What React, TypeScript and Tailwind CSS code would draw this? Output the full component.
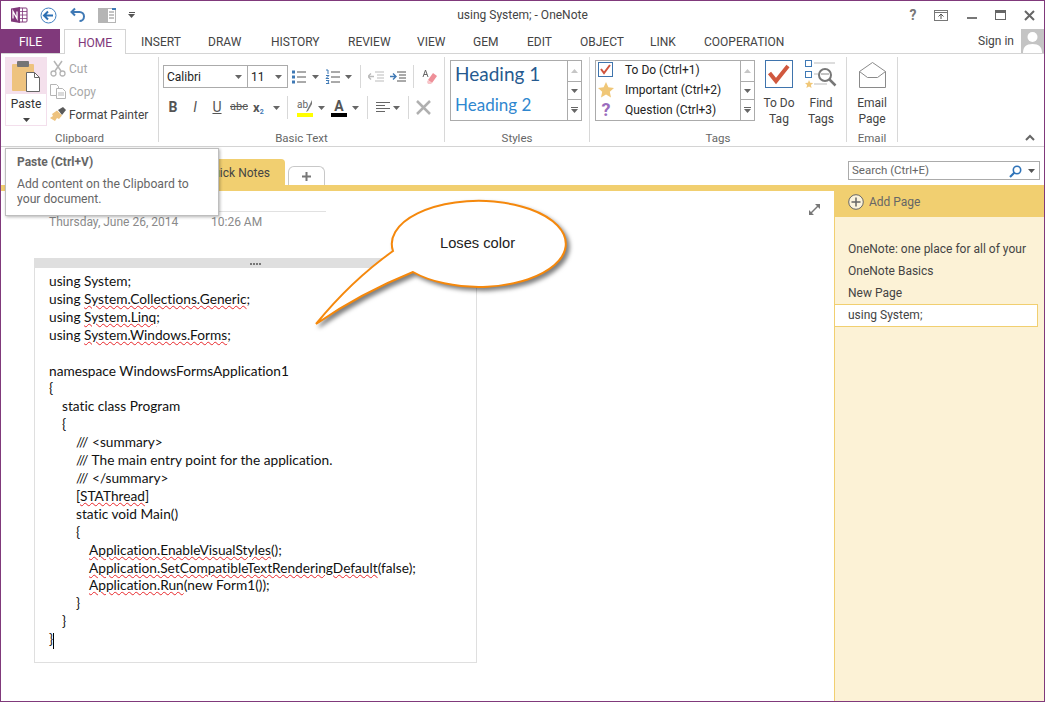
import React from "react";

const ui = "font-['Roboto','Open_Sans',sans-serif]";

function Caret({ c = "#666", className = "" }: { c?: string; className?: string }) {
  return (
    <svg width="7" height="4" viewBox="0 0 7 4" className={className}>
      <path d="M0 0h7L3.500 4z" fill={c} />
    </svg>
  );
}

function Scroll() {
  return (
    <div className="w-[14px] border-l border-[#ababab] flex flex-col">
      <div className="h-[20px] flex items-center justify-center">
        <svg width="7" height="4" viewBox="0 0 7 4"><path d="M0 4h7L3.500 0z" fill="#c6c6c6" /></svg>
      </div>
      <div className="h-[19px] border-y border-[#ababab] flex items-center justify-center">
        <Caret />
      </div>
      <div className="flex-1 flex flex-col items-center justify-center gap-[1px]">
        <div className="w-[7px] h-[1px] bg-[#666]" />
        <Caret />
      </div>
    </div>
  );
}

function Sep({ className = "h-[23px]" }: { className?: string }) {
  return <div className={`w-[1px] bg-[#d8d8d8] ${className}`} />;
}

function Group({ label, className, children }: { label: string; className: string; children: React.ReactNode }) {
  return (
    <div className={`relative flex flex-col h-[85px] mt-[3px] border-r border-[#d8d8d8] ${className}`}>
      <div className="flex-1 min-h-0">{children}</div>
      <div className="h-[15px] -mb-[4px] text-center text-[11.500px] leading-[15px] text-[#666]">{label}</div>
    </div>
  );
}

function Squig({ children }: { children: React.ReactNode }) {
  return (
    <span className="underline decoration-wavy decoration-[#e8262a] decoration-1 underline-offset-[1px]">{children}</span>
  );
}

const tabs = [
  { t: "INSERT", w: "w-[67px]" },
  { t: "DRAW", w: "w-[63px]" },
  { t: "HISTORY", w: "w-[77px]" },
  { t: "REVIEW", w: "w-[69px]" },
  { t: "VIEW", w: "w-[56px]" },
  { t: "GEM", w: "w-[54px]" },
  { t: "EDIT", w: "w-[53px]" },
  { t: "OBJECT", w: "w-[70px]" },
  { t: "LINK", w: "w-[54px]" },
  { t: "COOPERATION", w: "w-[100px]" },
];

const code: { ind: string; c: React.ReactNode }[] = [
  { ind: "pl-0", c: "using System;" },
  { ind: "pl-0", c: <>using <Squig>System.Collections.Generic</Squig>;</> },
  { ind: "pl-0", c: <>using <Squig>System.Linq</Squig>;</> },
  { ind: "pl-0", c: <>using <Squig>System.Windows.Forms</Squig>;</> },
  { ind: "pl-0", c: "\u00a0" },
  { ind: "pl-0", c: "namespace WindowsFormsApplication1" },
  { ind: "pl-0", c: "{" },
  { ind: "pl-[13px]", c: "static class Program" },
  { ind: "pl-[13px]", c: "{" },
  { ind: "pl-[27px]", c: "/// <summary>" },
  { ind: "pl-[27px]", c: "/// The main entry point for the application." },
  { ind: "pl-[27px]", c: "/// </summary>" },
  { ind: "pl-[27px]", c: <>[<Squig>STAThread</Squig>]</> },
  { ind: "pl-[27px]", c: "static void Main()" },
  { ind: "pl-[27px]", c: "{" },
  { ind: "pl-[40px]", c: <><Squig>Application.EnableVisualStyles</Squig>();</> },
  { ind: "pl-[40px]", c: <><Squig>Application.SetCompatibleTextRenderingDefault</Squig>(false);</> },
  { ind: "pl-[40px]", c: <><Squig>Application.Run</Squig>(new Form1());</> },
  { ind: "pl-[27px]", c: "}" },
  { ind: "pl-[13px]", c: "}" },
  { ind: "pl-0", c: <>{"}"}<span className="inline-block w-[1px] h-[16px] bg-black align-middle" /></> },
];

function SmallCheck() {
  return (
    <svg width="16" height="16" viewBox="0 0 16 16">
      <rect x="0.500" y="0.500" width="14" height="14" fill="#fff" stroke="#3f74ad" />
      <path d="M3 7l3 4 6-8" fill="none" stroke="#d0533c" strokeWidth="2" />
    </svg>
  );
}
function Star({ s = 16 }: { s?: number }) {
  return (
    <svg width={s} height={s} viewBox="0 0 16 16">
      <path d="M8 0l2.400 5.300 5.600.6-4.200 3.800 1.200 5.700L8 12.500l-5 2.900 1.200-5.700L0 5.900l5.600-.6z" fill="#f0c778" />
    </svg>
  );
}

export default function App() {
  return (
    <div className={`relative w-[1045px] h-[702px] border border-[#80397b] bg-white flex flex-col overflow-hidden text-[#444] text-[12px] ${ui}`}>
      {/* title bar */}
      <div className="h-[28px] flex items-center relative shrink-0">
        <div className="ml-[9px] w-[18px] h-[18px]">
          <svg width="18" height="18" viewBox="0 0 18 18">
            <rect x="8" y="2" width="9" height="14" rx="1" fill="#fff" stroke="#80397b" />
            <path d="M8 5.500h9M8 9h9M8 12.500h9M12.500 2v14" stroke="#80397b" strokeWidth="0.800" />
            <path d="M1 2.500L10 1v16l-9-1.500z" fill="#80397b" />
            <path d="M3 12.500V5.500l4 7V5.500" fill="none" stroke="#fff" strokeWidth="1.300" />
          </svg>
        </div>
        <div className="ml-[12px] w-[17px] h-[17px]">
          <svg width="17" height="17" viewBox="0 0 17 17">
            <circle cx="8.500" cy="8.500" r="7.500" fill="#fff" stroke="#3f7fc0" />
            <path d="M4 8.500h9M8 4.500l-4 4 4 4" fill="none" stroke="#2c6fb3" strokeWidth="2" />
          </svg>
        </div>
        <div className="ml-[13px] w-[16px] h-[16px]">
          <svg width="16" height="16" viewBox="0 0 16 16">
            <path d="M5 1.500L1.500 5 5 8.500M2 5h7.500a4.500 4.500 0 0 1 4.500 4.500c0 2.500-2 4.500-4.500 4.500" fill="none" stroke="#3f79b5" strokeWidth="2" />
          </svg>
        </div>
        <div className="ml-[12px] w-[18px] h-[15px]">
          <svg width="18" height="15" viewBox="0 0 18 15">
            <rect x="0" y="0" width="9" height="15" fill="#b5b5b5" />
            <rect x="9.500" y="0.500" width="8" height="14" fill="#fff" stroke="#b5b5b5" />
            <path d="M11 4h5M11 7h5M11 10h5" stroke="#8a8a8a" />
            <rect x="14" y="0" width="4" height="2" fill="#3f79b5" />
          </svg>
        </div>
        <div className="ml-[12px] flex flex-col items-center gap-[1px]">
          <div className="w-[6px] h-[1px] bg-[#555]" />
          <Caret c="#555" />
        </div>
        <div className="absolute inset-x-0 top-0 h-[28px] flex items-center justify-center text-[#444] text-[12px]">
          using System; - OneNote
        </div>
        <div className="ml-auto flex items-center mr-[9px] relative">
          <span className="w-[20px] text-center font-bold text-[14px] text-[#777]">?</span>
          <div className="ml-[11px] w-[14px]">
            <svg width="14" height="11" viewBox="0 0 14 11">
              <rect x="0.500" y="0.500" width="13" height="10" fill="none" stroke="#777" />
              <path d="M1 2.500h12" stroke="#777" />
              <path d="M7 9V4.500M4.500 6.500L7 4l2.500 2.500" fill="none" stroke="#555" />
            </svg>
          </div>
          <div className="ml-[19px] w-[10px] h-[2px] bg-[#777] mt-[6px]" />
          <div className="ml-[18px] w-[11px] h-[10px] border border-[#666] border-t-[3px]" />
          <div className="ml-[18px]">
            <svg width="11" height="11" viewBox="0 0 11 11"><path d="M1 1l9 9M10 1l-9 9" stroke="#666" strokeWidth="2" /></svg>
          </div>
        </div>
      </div>

      {/* tabs */}
      <div className="h-[25px] shrink-0 flex items-stretch border-b border-[#d4d4d4] relative">
        <div className="w-[59px] bg-[#80397b] text-white flex items-center justify-center pt-[2px]">FILE</div>
        <div className="ml-[4px] w-[62px] h-[25px] border border-b-0 border-[#d4d4d4] bg-white text-[#80397b] flex items-center justify-center pt-[2px]">HOME</div>
        {tabs.map((t) => (
          <div key={t.t} className={`${t.w} pl-[15px] pt-[2px] flex items-center text-[#444] whitespace-nowrap`}>{t.t}</div>
        ))}
        <div className="ml-auto flex items-center">
          <span className="mr-[7px] text-[#444]">Sign in</span>
          <div className="w-[23px] h-[24px] bg-[#c4c4c4] overflow-hidden">
            <svg width="23" height="24" viewBox="0 0 23 24">
              <circle cx="11.500" cy="8" r="5" fill="#fff" />
              <path d="M2 24c0-6 3-9 9.500-9s9.500 3 9.500 9z" fill="#fff" />
            </svg>
          </div>
        </div>
      </div>

      {/* ribbon */}
      <div className="h-[93px] shrink-0 flex border-b border-[#d4d4d4]">
        <Group label="Clipboard" className="w-[158px]">
          <div className="flex pl-[4px]">
            <div className="w-[42px] h-[69px] border border-[#f3dfec] flex flex-col items-center">
              <div className="w-full h-[36px] bg-[#f4e0ec] flex items-center justify-center">
                <svg width="30" height="33" viewBox="0 0 30 33">
                  <rect x="1" y="4" width="22" height="27" rx="1" fill="#eec37f" />
                  <rect x="6" y="1" width="12" height="6" rx="1" fill="#757575" />
                  <path d="M15.500 12.500h8l5 5v14h-13z" fill="#fff" stroke="#666" />
                  <path d="M23.500 12.500v5h5" fill="none" stroke="#666" />
                </svg>
              </div>
              <div className="mt-[2px] text-[12px] leading-[16px] text-[#333]">Paste</div>
              <Caret c="#444" className="mt-[6px]" />
            </div>
            <div className="ml-[3px] flex flex-col">
              <div className="h-[23px] flex items-center text-[#a8a8a8]">
                <svg width="16" height="17" viewBox="0 0 16 17" className="mr-[3px]">
                  <path d="M4 1l7 10M12 1L5 11" stroke="#b5b5b5" strokeWidth="1.500" />
                  <circle cx="3.500" cy="13.500" r="2.500" fill="none" stroke="#b5b5b5" strokeWidth="1.300" />
                  <circle cx="12.500" cy="13.500" r="2.500" fill="none" stroke="#b5b5b5" strokeWidth="1.300" />
                </svg>
                Cut
              </div>
              <div className="h-[23px] flex items-center text-[#a8a8a8]">
                <svg width="16" height="15" viewBox="0 0 16 15" className="mr-[3px]">
                  <path d="M.5.500h6l2 2v9h-8z" fill="#fff" stroke="#b5b5b5" />
                  <path d="M6.500 4.500h6l3 3v7h-9z" fill="#fff" stroke="#b5b5b5" />
                  <path d="M8 9h6M8 11h6" stroke="#b5b5b5" />
                </svg>
                Copy
              </div>
              <div className="h-[23px] flex items-center text-[#444] whitespace-nowrap">
                <svg width="16" height="15" viewBox="0 0 16 15" className="mr-[3px]">
                  <path d="M8 3l5-3 3 3-4 5z" fill="#5a5a5a" />
                  <path d="M7 3.500l5 5-3 3.500-2-1-2 3-5-3 3-2-1-2z" fill="#eec37f" />
                </svg>
                Format Painter
              </div>
            </div>
          </div>
        </Group>

        <Group label="Basic Text" className="w-[286px]">
          <div className="pl-[4px] pt-[8px]">
            <div className="flex items-center h-[23px]">
              <div className="w-[85px] h-[23px] border border-[#ababab] flex items-center pl-[3px] pr-[5px] justify-between text-[#222]">
                Calibri<Caret />
              </div>
              <div className="w-[40px] h-[23px] border border-l-0 border-[#ababab] flex items-center pl-[3px] pr-[5px] justify-between text-[#222]">
                11<Caret />
              </div>
              <svg width="14" height="16" viewBox="0 0 14 16" className="ml-[4px]">
                <path d="M5 3h9M5 8h9M5 13h9" stroke="#555" />
                <path d="M0 1.500h3v3H0zM0 6.500h3v3H0zM0 11.500h3v3H0z" fill="#3f79b5" />
              </svg>
              <Caret className="ml-[6px]" />
              <svg width="15" height="16" viewBox="0 0 15 16" className="ml-[6px]">
                <path d="M6 3h9M6 8h9M6 13h9" stroke="#555" />
                <path d="M1 1h2v4M1 6.500h3l-3 3h3M1 11.500h3l-1 1.500 1 1.500H1" fill="none" stroke="#3f79b5" />
              </svg>
              <Caret className="ml-[5px]" />
              <Sep className="h-[23px] ml-[8px]" />
              <svg width="16" height="12" viewBox="0 0 16 12" className="ml-[7px]">
                <path d="M7 1h9M9 4h7M9 7h7M7 10h9" stroke="#bbb" />
                <path d="M0 5.500h6M3 2.500l-3 3 3 3" fill="none" stroke="#bbb" strokeWidth="1.400" />
              </svg>
              <svg width="16" height="12" viewBox="0 0 16 12" className="ml-[6px]">
                <path d="M7 1h9M9 4h7M9 7h7M7 10h9" stroke="#555" />
                <path d="M0 5.500h6M3 2.500l3 3-3 3" fill="none" stroke="#3f79b5" strokeWidth="1.400" />
              </svg>
              <Sep className="h-[23px] ml-[7px]" />
              <svg width="15" height="16" viewBox="0 0 15 16" className="ml-[8px]">
                <path d="M1 8L3.500 1 6 8M2 5.500h3" fill="none" stroke="#666" />
                <path d="M11 4l4 3-5 7-4-3z" fill="#ee8f98" />
                <path d="M6 11l4 3-1 1H6l-1-2z" fill="#f7c4c8" />
              </svg>
            </div>
            <div className="flex items-center h-[25px] mt-[7px] text-[#555]">
              <span className="w-[10px] ml-[5px] font-bold text-[14px] text-center">B</span>
              <span className="w-[10px] ml-[12px] italic text-[14px] text-center">I</span>
              <span className="w-[10px] ml-[12px] underline text-[14px] text-center">U</span>
              <span className="w-[18px] ml-[8px] line-through text-[11px] text-center">abc</span>
              <span className="w-[16px] ml-[5px] font-bold text-[13px] whitespace-nowrap">x<sub className="text-[7px] text-[#3f79b5]">2</sub></span>
              <Caret className="ml-[4px]" />
              <Sep className="h-[23px] ml-[7px]" />
              <div className="ml-[9px] w-[16px] h-[18px] flex flex-col">
                <div className="h-[14px] flex items-start">
                  <span className="text-[10px] leading-[12px] text-[#666]">ab</span>
                  <svg width="6" height="14" viewBox="0 0 6 14" className="-ml-[2px]">
                    <path d="M6 1L1 11l-1 2 2-1L6 5z" fill="#777" />
                  </svg>
                </div>
                <div className="h-[4px] bg-[#ffff00]" />
              </div>
              <Caret className="ml-[5px]" />
              <div className="ml-[6px] w-[16px] h-[18px] flex flex-col items-center">
                <div className="h-[14px] font-bold text-[14px] leading-[14px] text-[#555]">A</div>
                <div className="h-[4px] w-full bg-black" />
              </div>
              <Caret className="ml-[5px]" />
              <Sep className="h-[23px] ml-[8px]" />
              <svg width="14" height="11" viewBox="0 0 14 11" className="ml-[8px]">
                <path d="M0 .5h14M0 3.500h9M0 6.500h14M0 9.500h9" stroke="#666" />
              </svg>
              <Caret className="ml-[3px]" />
              <Sep className="h-[23px] ml-[8px]" />
              <svg width="15" height="15" viewBox="0 0 15 15" className="ml-[7px]">
                <path d="M1 1l13 13M14 1L1 14" stroke="#b0b0b0" strokeWidth="2.500" />
              </svg>
            </div>
          </div>
        </Group>

        <Group label="Styles" className="w-[145px]">
          <div className="pl-[5px] pt-[3px]">
            <div className="w-[132px] h-[61px] border border-[#ababab] flex">
              <div className="flex-1 pl-[4px] font-['Lato',sans-serif]">
                <div className="h-[26px] text-[19px] leading-[26px] text-[#265a8f]">Heading 1</div>
                <div className="h-[35px] text-[17px] leading-[35px] text-[#2f87cf]">Heading 2</div>
              </div>
              <Scroll />
            </div>
          </div>
        </Group>

        <Group label="Tags" className="w-[257px]">
          <div className="flex pl-[5px] pt-[3px]">
            <div className="w-[160px] h-[61px] border border-[#ababab] flex">
              <div className="flex-1 flex flex-col text-[#222]">
                <div className="h-[19px] flex items-center pl-[2px]"><SmallCheck /><span className="ml-[11px]">To Do (Ctrl+1)</span></div>
                <div className="h-[20px] flex items-center pl-[2px]"><Star /><span className="ml-[11px]">Important (Ctrl+2)</span></div>
                <div className="h-[21px] flex items-center pl-[2px]">
                  <span className="w-[16px] text-center font-bold text-[18px] leading-[18px] text-[#9a6cbd]">?</span>
                  <span className="ml-[11px]">Question (Ctrl+3)</span>
                </div>
              </div>
              <Scroll />
            </div>
            <div className="ml-[7px] w-[34px] flex flex-col items-center">
              <svg width="28" height="28" viewBox="0 0 28 28">
                <rect x="0.500" y="0.500" width="27" height="27" fill="#fff" stroke="#3f74ad" />
                <path d="M4.500 13l6.500 8L23 6" fill="none" stroke="#d0583e" strokeWidth="4" />
              </svg>
              <div className="mt-[7px] text-center leading-[16px] text-[#444]">To Do<br />Tag</div>
            </div>
            <div className="ml-[8px] w-[34px] flex flex-col items-center">
              <svg width="32" height="29" viewBox="0 0 32 29">
                <rect x="0.500" y="0.500" width="6" height="6" fill="#fff" stroke="#3f79b5" />
                <rect x="0.500" y="11.500" width="6" height="6" fill="#fff" stroke="#3f79b5" />
                <path d="M9 3h21M9 14h5M9 24h13" stroke="#bbb" />
                <path d="M4 20l1.200 2.800 3 .3-2.300 2 .7 3L4 26.500 1.400 28l.7-3L0 23.100l3-.3z" fill="#f0c778" />
                <circle cx="20" cy="15" r="6" fill="#fff" stroke="#777" strokeWidth="2" />
                <path d="M24.500 19.500l6 6" stroke="#777" strokeWidth="2.500" />
                <path d="M16 14h8" stroke="#888" />
              </svg>
              <div className="mt-[6px] text-center leading-[16px] text-[#444]">Find<br />Tags</div>
            </div>
          </div>
        </Group>

        <Group label="Email" className="w-[51px]">
          <div className="flex flex-col items-center pt-[5px]">
            <svg width="27" height="26" viewBox="0 0 27 26">
              <path d="M.5 9.500L13.500.5l13 9v16H.5z" fill="#fff" stroke="#8a8a8a" />
              <path d="M.5 9.500l8 6h10l8-6" fill="none" stroke="#8a8a8a" />
            </svg>
            <div className="mt-[7px] text-center leading-[16px] text-[#444]">Email<br />Page</div>
          </div>
        </Group>

        <div className="ml-auto mr-[9px] mb-[5px] self-end">
          <svg width="10" height="7" viewBox="0 0 10 7"><path d="M1 6l4-4 4 4" fill="none" stroke="#666" strokeWidth="2" /></svg>
        </div>
      </div>

      {/* notebook bar */}
      <div className="h-[38px] shrink-0 flex items-end relative">
        <div className="ml-[158px] w-[126px] h-[26px] bg-[#f1cf70] rounded-t-[4px] flex items-center pl-[46px] pt-[2px] whitespace-nowrap text-[#444]">
          Quick Notes
        </div>
        <div className="ml-[3px] w-[37px] h-[19px] border border-b-0 border-[#c8c8c8] rounded-t-[6px] flex items-center justify-center">
          <svg width="9" height="9" viewBox="0 0 9 9"><path d="M4.500 0v9M0 4.500h9" stroke="#777" strokeWidth="2" /></svg>
        </div>
        <div className="ml-auto mr-[4px] mb-[5px] w-[192px] h-[19px] border border-[#ababab] flex items-center pl-[3px] pr-[4px] pt-[1px] text-[11.500px] text-[#666]">
          Search (Ctrl+E)
          <svg width="13" height="13" viewBox="0 0 13 13" className="ml-auto">
            <circle cx="8" cy="5" r="3.700" fill="none" stroke="#2f73b8" strokeWidth="1.600" />
            <path d="M5.500 7.500L1 12" stroke="#2f73b8" strokeWidth="2.200" />
          </svg>
          <Caret c="#555" className="ml-[6px]" />
        </div>
      </div>
      <div className="h-[6px] shrink-0 bg-[#f1cf70]" />

      {/* main */}
      <div className="flex-1 min-h-0 flex">
        <div className="relative flex-1 pl-[33px] pt-[20px]">
          <div className="ml-[15px] w-[277px] h-[1px] bg-[#e1e1e1]" />
          <div className="ml-[15px] mt-[3px] h-[14px] flex text-[12px] leading-[14px] text-[#8a8a8a]">
            <span className="w-[162px]">Thursday, June 26, 2014</span>
            <span>10:26 AM</span>
          </div>
          <div className="mt-[29px] w-[443px] h-[405px] border border-[#dfdfdf] flex flex-col">
            <div className="h-[9px] shrink-0 bg-[#dfdfdf] flex items-center justify-center gap-[1px]">
              <i className="w-[2px] h-[2px] bg-[#777]" /><i className="w-[2px] h-[2px] bg-[#777]" /><i className="w-[2px] h-[2px] bg-[#777]" /><i className="w-[2px] h-[2px] bg-[#777]" />
            </div>
            <div className="pl-[14px] pt-[4px] font-['Lato',sans-serif] text-[13.700px] leading-[17.900px] text-[#111] [font-variant-ligatures:none]">
              {code.map((l, i) => (
                <div key={i} className={`${l.ind} whitespace-pre`}>{l.c}</div>
              ))}
            </div>
          </div>
          <svg width="11" height="11" viewBox="0 0 11 11" className="absolute top-[13px] right-[14px]">
            <path d="M1.500 9.500l8-8" stroke="#777" strokeWidth="1.500" />
            <path d="M6 0h5v5zM0 6v5h5z" fill="#777" />
          </svg>
        </div>
        <div className="w-[210px] shrink-0 bg-[#fcf2d6] border-l border-[#f1cf70]">
          <div className="h-[26px] -ml-[1px] bg-[#f1cf70] flex items-center pl-[14px] pb-[4px] text-[#666]">
            <svg width="16" height="16" viewBox="0 0 16 16" className="mr-[5px]">
              <circle cx="8" cy="8" r="7.300" fill="#fbf3dc" stroke="#666" />
              <path d="M8 3.500v9M3.500 8h9" stroke="#666" strokeWidth="1.500" />
            </svg>
            Add Page
          </div>
          <div className="pt-[21px] text-[#444]">
            <div className="h-[22px] pl-[13px] flex items-center whitespace-nowrap">OneNote: one place for all of your</div>
            <div className="h-[22px] pl-[13px] flex items-center">OneNote Basics</div>
            <div className="h-[22px] pl-[13px] flex items-center">New Page</div>
            <div className="h-[23px] -ml-[1px] w-[204px] bg-white border border-[#f1cf70] pl-[13px] pb-[1px] flex items-center">using System;</div>
          </div>
        </div>
      </div>

      {/* tooltip */}
      <div className="absolute left-[4px] top-[147px] w-[214px] h-[68px] bg-white border border-[#bebebe] shadow-[1px_1px_3px_rgba(0,0,0,0.3)] px-[11px] pt-[5px] text-[#666]">
        <div className="font-bold text-[12px] leading-[16px] text-[#666]">Paste (Ctrl+V)</div>
        <div className="mt-[7px] text-[12.200px] leading-[15px]">Add content on the Clipboard to your document.</div>
      </div>

      {/* callout */}
      <div className="absolute left-[300px] top-[190px] w-[280px] h-[150px]">
        <svg width="280" height="150" viewBox="0 0 280 150" className="drop-shadow-[3px_3px_2px_rgba(0,0,0,0.5)]">
          <path
            d="M92 60A87 43 0 1 1 112 81Q60 102 15 133Q50 90 92 60Z"
            fill="#fff"
            stroke="#f5880c"
            strokeWidth="2"
            strokeLinejoin="miter"
          />
        </svg>
        <div className="absolute left-[139px] top-[42px] font-['Liberation_Sans',sans-serif] text-[14.700px] leading-[20px] text-[#222] whitespace-nowrap">Loses color</div>
      </div>
    </div>
  );
}
